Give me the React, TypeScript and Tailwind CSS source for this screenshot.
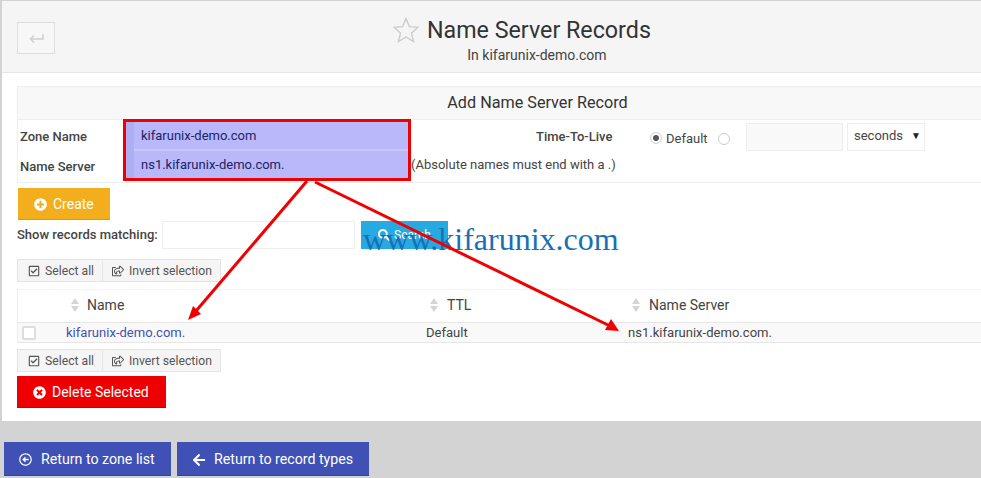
import React from "react"
import { FaArrowLeft, FaPlusCircle, FaRegArrowAltCircleLeft, FaRegCheckSquare, FaRegShareSquare, FaSearch, FaTimesCircle } from "react-icons/fa"

const Toolbar = () => (
    <div className="flex h-[23px] w-[204px] border border-[#e4e4e4] bg-[#f5f5f5] pt-[1px] text-[12.2px] text-[#555]">
        <div className="flex w-[85px] items-center gap-[5px] border-r border-[#e4e4e4] pl-[10px]">
            <FaRegCheckSquare size={12} />
            <span>Select all</span>
        </div>
        <div className="flex flex-1 items-center gap-[5px] pl-[9px]">
            <FaRegShareSquare size={12} />
            <span>Invert selection</span>
        </div>
    </div>
)

const SortArrows = () => (
    <svg width="8" height="14" viewBox="0 0 8 14" className="shrink-0">
        <path d="M4 0 8 6H0Z" fill="#d5d5d5" />
        <path d="M4 14 8 8H0Z" fill="#d5d5d5" />
    </svg>
)

const Annotations = () => (
    <svg width="981" height="478" viewBox="0 0 981 478" className="pointer-events-none absolute left-0 top-0">
        <path d="M307 181 196 311" stroke="#f00000" strokeWidth="3" fill="none" />
        <path d="M188 320 193 306 201 314Z" fill="#f00000" />
        <path d="M315 182 610 326" stroke="#f00000" strokeWidth="3" fill="none" />
        <path d="M619 331 605 330 611 319Z" fill="#f00000" />
    </svg>
)

export default function App() {
    return (
        <div className="relative h-[478px] w-[981px] overflow-hidden bg-[#d3d3d3] font-['Roboto',sans-serif] text-[#333]">
            <div className="pt-[1px] pl-[2px]">
                <div className="h-[420px] bg-white">
                    {/* Page header */}
                    <div className="flex h-[72px] items-start border-b border-[#e6e6e6] bg-[#f5f5f5]">
                        <div className="ml-[15px] mt-[21px] flex h-[32px] w-[38px] items-center justify-center border border-[#ddd] bg-[#f7f7f7]">
                            <svg width="15" height="10" viewBox="0 0 15 10" fill="none" stroke="#cfcfcf" strokeWidth="1.5">
                                <path d="M14 1V6H1.5" />
                                <path d="M5 2.5 1.5 6 5 9.5" />
                            </svg>
                        </div>
                        <div className="ml-[338px] flex flex-col items-center pt-[14px]">
                            <div className="flex items-center gap-[8px]">
                                <svg width="26" height="26" viewBox="0 0 26 26" fill="none" stroke="#cccccc" strokeWidth="1.4">
                                    <path d="M13 1.5 16.4 9.6 25 10.3 18.5 16 20.5 24.5 13 20 5.5 24.5 7.5 16 1 10.3 9.6 9.6Z" />
                                </svg>
                                <span className="text-[23.25px] leading-[30px] text-[#333]">Name Server Records</span>
                            </div>
                            <div className="pl-[30px] text-[14px] leading-[20px] text-[#444]">In kifarunix-demo.com</div>
                        </div>
                    </div>

                    <div className="pl-[15px] pt-[13px]">
                        {/* Add record form */}
                        <div className="h-[97px] border-y border-[#eee] border-l">
                            <div className="flex h-[33px] items-center justify-center border-b border-[#eee] bg-[#f8f8f8] pl-[76px] text-[16.2px] text-[#333]">
                                Add Name Server Record
                            </div>
                            <div className="flex">
                                <div className="w-[105px] pl-[2px] pt-[2px] text-[13px] font-medium text-[#444]">
                                    <div className="flex h-[30px] items-center">Zone Name</div>
                                    <div className="flex h-[30px] items-center">Name Server</div>
                                </div>
                                <div className="relative -mt-[1px] h-[62px] w-[288px] border-[3px] border-[#ee0000] bg-[#aeaef4] text-[13px] text-[#222266]">
                                    <div className="ml-[8px] flex h-[29px] items-center border-b-2 border-[#c8c8fb] bg-[#b8b8fb] pl-[7px]">kifarunix-demo.com</div>
                                    <div className="ml-[8px] flex h-[27px] items-center bg-[#b8b8fb] pl-[7px]">ns1.kifarunix-demo.com.</div>
                                </div>
                                <div className="flex-1 text-[13px] text-[#444]">
                                    <div className="flex h-[30px] items-center">
                                        <span className="ml-[125px] w-[114px] pt-[4px] font-medium">Time-To-Live</span>
                                        <span className="mt-[6px] flex h-[12px] w-[12px] items-center justify-center rounded-full border border-[#ccc]">
                                            <span className="h-[6px] w-[6px] rounded-full bg-[#555]" />
                                        </span>
                                        <span className="ml-[4px] w-[52px] pt-[7px]">Default</span>
                                        <span className="mt-[7px] h-[12px] w-[12px] rounded-full border border-[#ccc]" />
                                        <span className="ml-[16px] mt-[3px] h-[28px] w-[97px] border border-[#eee] bg-[#f9f9f9]" />
                                        <span className="ml-[4px] mt-[3px] flex h-[28px] w-[78px] items-center justify-between border border-[#eee] pb-[2px] pl-[6px] pr-[3px]">
                                            seconds <span className="text-[10px] text-[#222]">▼</span>
                                        </span>
                                    </div>
                                    <div className="flex h-[30px] items-center">(Absolute names must end with a .)</div>
                                </div>
                            </div>
                        </div>

                        <button className="ml-[1px] mt-[5px] flex h-[32px] w-[92px] items-center gap-[6px] border-b border-[#d99c12] bg-[#f2ae1c] pl-[16px] pt-[1px] text-[14px] text-white">
                            <FaPlusCircle size={13} />
                            Create
                        </button>

                        {/* Search row */}
                        <div className="mt-[1px] flex h-[28px] items-center">
                            <span className="w-[145px] text-[13px] font-medium text-[#444]">Show records matching:</span>
                            <span className="h-[28px] w-[193px] border border-[#eee]" />
                            <button className="ml-[6px] flex h-[28px] w-[87px] items-center justify-center gap-[4px] bg-[#27aae1] text-[12px] text-white">
                                <FaSearch size={12} /> Search
                            </button>
                        </div>

                        <div className="mt-[10px]"><Toolbar /></div>

                        {/* Records table */}
                        <div className="mt-[7px] border-l border-[#eee]">
                            <div className="flex h-[34px] items-center border-y border-y-[#f3f3f3] border-b-[#e6e6e6] pb-[2px] text-[14px] text-[#444]">
                                <span className="ml-[53px] w-[16px]"><SortArrows /></span>
                                <span className="w-[343px]">Name</span>
                                <span className="w-[17px]"><SortArrows /></span>
                                <span className="w-[185px]">TTL</span>
                                <span className="w-[17px]"><SortArrows /></span>
                                <span>Name Server</span>
                            </div>
                            <div className="flex h-[20px] items-center border-b border-[#e6e6e6] bg-[#f9f9f9] text-[13.05px] text-[#444]">
                                <span className="ml-[4px] h-[14px] w-[14px] rounded-[2px] border-2 border-[#ddd] bg-white" />
                                <span className="ml-[30px] w-[360px] text-[#3f51b5]">kifarunix-demo.com.</span>
                                <span className="w-[202px]">Default</span>
                                <span>ns1.kifarunix-demo.com.</span>
                            </div>
                        </div>

                        <div className="mt-[6px]"><Toolbar /></div>

                        <button className="mt-[4px] flex h-[32px] w-[149px] items-center gap-[6px] border-b border-[#cc0000] bg-[#ee0000] pl-[16px] pt-[1px] text-[14px] text-white">
                            <FaTimesCircle size={13} />
                            Delete Selected
                        </button>
                    </div>
                </div>
            </div>

            {/* Bottom buttons */}
            <div className="mt-[21px] flex gap-[6px] pl-[4px]">
                <button className="flex h-[34px] w-[167px] items-center gap-[9px] border-b border-[#354497] bg-[#3f51b5] pl-[15px] pt-[2px] text-[14.2px] text-white">
                    <FaRegArrowAltCircleLeft size={13} />
                    Return to zone list
                </button>
                <button className="flex h-[34px] w-[192px] items-center gap-[8px] border-b border-[#354497] bg-[#3f51b5] pl-[15px] pt-[2px] text-[14.2px] text-white">
                    <FaArrowLeft size={14} />
                    Return to record types
                </button>
            </div>

            {/* Watermark */}
            <div className="absolute left-[363px] top-[220px] font-['Liberation_Serif',serif] text-[32px] leading-[38px] text-[#1a6fb5]">
                www.kifarunix.com
            </div>
            <Annotations />
        </div>
    )
}
